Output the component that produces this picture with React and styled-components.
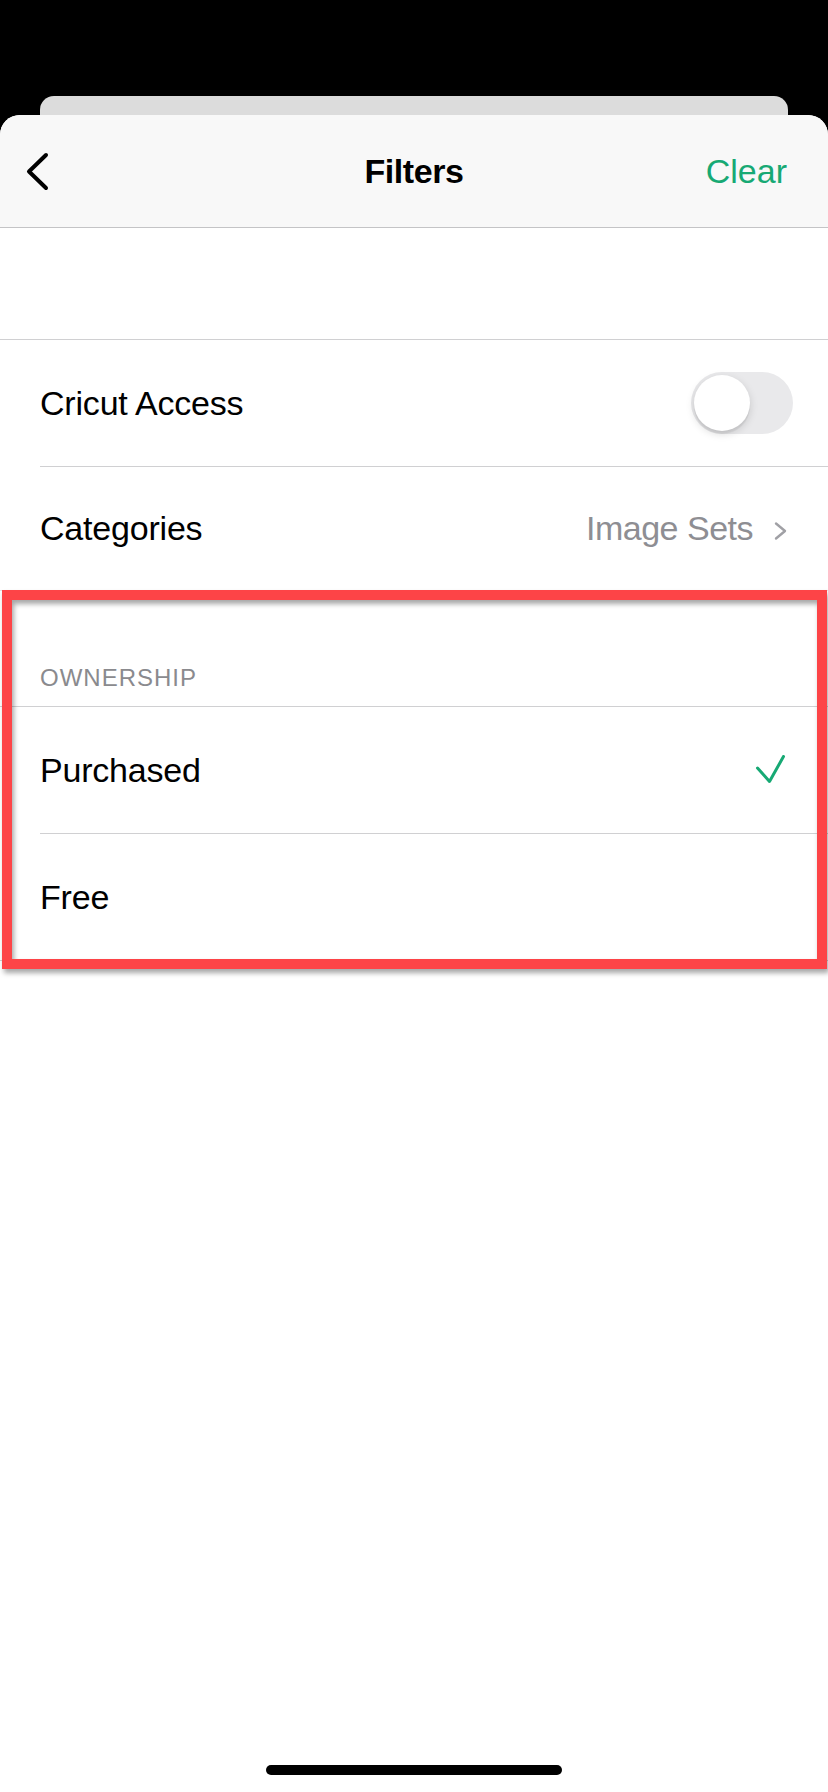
import React from 'react';
import styled, { createGlobalStyle } from 'styled-components';

const GlobalStyle = createGlobalStyle`
  html, body {
    margin: 0;
    padding: 0;
    background: #ffffff;
  }
  body {
    font-family: "Liberation Sans", Arial, sans-serif;
    color: #000000;
  }
`;

const Screen = styled.div`
  width: 828px;
  height: 1792px;
  display: flex;
  flex-direction: column;
  background: #000000;
  overflow: hidden;
`;

const BackCard = styled.div`
  margin: 96px 40px 0;
  height: 19px;
  background: #dcdcdc;
  border-radius: 14px 14px 0 0;
`;

const Sheet = styled.div`
  flex: 1;
  display: flex;
  flex-direction: column;
  background: #ffffff;
  border-radius: 20px 20px 0 0;
  overflow: hidden;
`;

const Header = styled.header`
  height: 112px;
  display: grid;
  grid-template-columns: 1fr auto 1fr;
  align-items: center;
  padding: 0 41px;
  background: #f8f8f8;
  border-bottom: 1px solid #c4c4c6;
`;

const BackButton = styled.button`
  justify-self: start;
  display: flex;
  align-items: center;
  margin-left: -17px;
  padding: 0;
  border: 0;
  background: none;
`;

const Title = styled.h1`
  margin: 0;
  font-size: 34px;
  font-weight: 700;
  letter-spacing: -0.4px;
`;

const ClearButton = styled.button`
  justify-self: end;
  padding: 0;
  border: 0;
  background: none;
  font-family: inherit;
  font-size: 34px;
  color: #17a974;
`;

const Spacer = styled.div`
  height: 111px;
  border-bottom: 1px solid #d0d0d2;
`;

const Row = styled.div`
  box-sizing: border-box;
  height: ${(p) => p.$height || 127}px;
  margin-left: 40px;
  padding-right: ${(p) => p.$right || 35}px;
  display: flex;
  align-items: center;
  justify-content: space-between;
  border-bottom: ${(p) => (p.$last ? 'none' : '1px solid #d0d0d2')};
`;

const Label = styled.span`
  font-size: 34px;
  letter-spacing: -0.2px;
  color: #000000;
`;

const Value = styled.span`
  display: flex;
  align-items: center;
  gap: 20px;
  font-size: 34px;
  letter-spacing: -0.5px;
  color: #8e8e93;
`;

const Toggle = styled.div`
  position: relative;
  width: 102px;
  height: 62px;
  border-radius: 31px;
  background: #e9e9eb;

  &::after {
    content: '';
    position: absolute;
    top: 3px;
    left: 3px;
    width: 56px;
    height: 56px;
    border-radius: 50%;
    background: #ffffff;
    box-shadow: 0 3px 8px rgba(0, 0, 0, 0.15), 0 3px 1px rgba(0, 0, 0, 0.06);
  }
`;

const Highlight = styled.section`
  position: relative;
  border-top: 1px solid #e2e2e4;
  border-bottom: 1px solid #d0d0d2;

  &::after {
    content: '';
    position: absolute;
    top: -1px;
    left: 2px;
    right: 1px;
    bottom: -9px;
    border: 10px solid #fd4447;
    box-shadow: 2px 4px 5px rgba(0, 0, 0, 0.35), inset 2px 4px 5px rgba(0, 0, 0, 0.35);
    pointer-events: none;
  }
`;

const SectionHeader = styled.div`
  box-sizing: border-box;
  height: 116px;
  display: flex;
  align-items: flex-end;
  padding: 0 0 16px 40px;
  border-bottom: 1px solid #d0d0d2;
  font-size: 24px;
  line-height: 1;
  letter-spacing: 1px;
  color: #8a8a8e;
`;

const HomeIndicator = styled.div`
  width: 296px;
  height: 10px;
  margin: auto auto 17px;
  border-radius: 5px;
  background: #000000;
`;

const ChevronLeft = () => (
  <svg width="26" height="40" viewBox="0 0 26 40">
    <path d="M22 4 L5 20.5 L22 37" fill="none" stroke="#000" strokeWidth="4" strokeLinecap="round" strokeLinejoin="round" />
  </svg>
);

const ChevronRight = () => (
  <svg width="16" height="20" viewBox="0 0 16 20" style={{ marginTop: 4 }}>
    <path d="M3 2.5 L12 10 L3 17.5" fill="none" stroke="#a0a0a5" strokeWidth="2.4" strokeLinecap="round" strokeLinejoin="round" />
  </svg>
);

const Check = () => (
  <svg width="32" height="30" viewBox="0 0 32 30">
    <path d="M2.5 13 L14.5 26.5 L28.5 1.5" fill="none" stroke="#17a974" strokeWidth="3" strokeLinecap="round" strokeLinejoin="round" />
  </svg>
);

const App = () => (
  <>
    <GlobalStyle />
    <Screen>
      <BackCard />
      <Sheet>
        <Header>
          <BackButton type="button" aria-label="Back">
            <ChevronLeft />
          </BackButton>
          <Title>Filters</Title>
          <ClearButton type="button">Clear</ClearButton>
        </Header>
        <Spacer />
        <Row>
          <Label>Cricut Access</Label>
          <Toggle />
        </Row>
        <Row $height={123} $right={39} $last>
          <Label>Categories</Label>
          <Value>
            Image Sets
            <ChevronRight />
          </Value>
        </Row>
        <Highlight>
          <SectionHeader>OWNERSHIP</SectionHeader>
          <Row $right={41}>
            <Label>Purchased</Label>
            <Check />
          </Row>
          <Row $height={126} $last>
            <Label>Free</Label>
          </Row>
        </Highlight>
        <HomeIndicator />
      </Sheet>
    </Screen>
  </>
);

export default App;
